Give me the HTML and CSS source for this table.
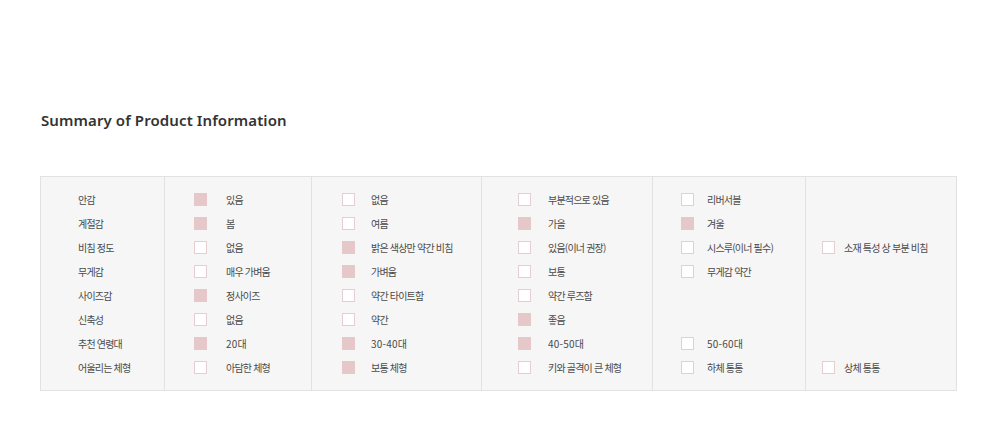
FILE: index.html
```html
<!DOCTYPE html>
<html lang="ko">
<head>
<meta charset="utf-8">
<title>Summary of Product Information</title>
<link rel="stylesheet" href="styles.css">
</head>
<body>
<div class="page">
  <h2 class="title">Summary of Product Information</h2>
  <div class="summary">
    <div class="col col-label">
      <div class="row">안감</div>
      <div class="row">계절감</div>
      <div class="row">비침 정도</div>
      <div class="row">무게감</div>
      <div class="row">사이즈감</div>
      <div class="row">신축성</div>
      <div class="row">추천 연령대</div>
      <div class="row">어울리는 체형</div>
    </div>
    <div class="col col-2">
      <div class="row"><span class="box on"></span><span class="txt">있음</span></div>
      <div class="row"><span class="box on"></span><span class="txt">봄</span></div>
      <div class="row"><span class="box"></span><span class="txt">없음</span></div>
      <div class="row"><span class="box"></span><span class="txt">매우 가벼움</span></div>
      <div class="row"><span class="box on"></span><span class="txt">정사이즈</span></div>
      <div class="row"><span class="box"></span><span class="txt">없음</span></div>
      <div class="row"><span class="box on"></span><span class="txt"><span class="num">20</span>대</span></div>
      <div class="row"><span class="box"></span><span class="txt">아담한 체형</span></div>
    </div>
    <div class="col col-3">
      <div class="row"><span class="box"></span><span class="txt">없음</span></div>
      <div class="row"><span class="box"></span><span class="txt">여름</span></div>
      <div class="row"><span class="box on"></span><span class="txt">밝은 색상만 약간 비침</span></div>
      <div class="row"><span class="box on"></span><span class="txt">가벼움</span></div>
      <div class="row"><span class="box"></span><span class="txt">약간 타이트함</span></div>
      <div class="row"><span class="box"></span><span class="txt">약간</span></div>
      <div class="row"><span class="box on"></span><span class="txt"><span class="num">30-40</span>대</span></div>
      <div class="row"><span class="box on"></span><span class="txt">보통 체형</span></div>
    </div>
    <div class="col col-4">
      <div class="row"><span class="box"></span><span class="txt">부분적으로 있음</span></div>
      <div class="row"><span class="box on"></span><span class="txt">가을</span></div>
      <div class="row"><span class="box"></span><span class="txt">있음(이너 권장)</span></div>
      <div class="row"><span class="box"></span><span class="txt">보통</span></div>
      <div class="row"><span class="box"></span><span class="txt">약간 루즈함</span></div>
      <div class="row"><span class="box on"></span><span class="txt">좋음</span></div>
      <div class="row"><span class="box on"></span><span class="txt"><span class="num">40-50</span>대</span></div>
      <div class="row"><span class="box"></span><span class="txt">키와 골격이 큰 체형</span></div>
    </div>
    <div class="col col-5">
      <div class="row"><span class="box"></span><span class="txt">리버서블</span></div>
      <div class="row"><span class="box on"></span><span class="txt">겨울</span></div>
      <div class="row"><span class="box"></span><span class="txt">시스루(이너 필수)</span></div>
      <div class="row"><span class="box"></span><span class="txt">무게감 약간</span></div>
      <div class="row"></div>
      <div class="row"></div>
      <div class="row"><span class="box"></span><span class="txt"><span class="num">50-60</span>대</span></div>
      <div class="row"><span class="box"></span><span class="txt">하체 통통</span></div>
    </div>
    <div class="col col-6">
      <div class="row"></div>
      <div class="row"></div>
      <div class="row"><span class="box"></span><span class="txt">소재 특성 상 부분 비침</span></div>
      <div class="row"></div>
      <div class="row"></div>
      <div class="row"></div>
      <div class="row"></div>
      <div class="row"><span class="box"></span><span class="txt">상체 통통</span></div>
    </div>
  </div>
</div>
</body>
</html>
```
FILE: styles.css
```css
* { box-sizing: border-box; }
body { margin: 0; background: #fff; }
.page { padding: 0 46px 0 40px; }
.title {
  margin: 0;
  padding: 108px 0 0 1px;
  font-family: "Noto Sans", sans-serif;
  font-size: 15px;
  font-weight: 600;
  line-height: 24px;
  color: #333;
  letter-spacing: 0.1px;
}
.summary {
  margin-top: 44px;
  display: grid;
  grid-template-columns: 123px 147px 170px 171px 153px 153px;
  background: #f6f6f6;
  border: 1px solid #e2e2e2;
  width: 917px;
}
.col {
  padding: 10px 0 11px 0;
  border-left: 1px solid #e2e2e2;
  font-family: "Noto Sans CJK KR", "Noto Sans", sans-serif;
  font-size: 10px;
  letter-spacing: -0.8px;
  color: #4a4a4a;
}
.num { letter-spacing: 0.2px; }
.col-label { border-left: 0; padding-left: 37px; }
.row { height: 24px; display: flex; align-items: center; }
.box {
  width: 13px; height: 13px; flex: none;
  background: #fff;
  border: 1px solid #e6cdcf;
}
.box.on { background: #e6c8ca; border-color: #e6c8ca; }
.col-2 { padding-left: 29px; }
.col-2 .box { margin-right: 19px; }
.col-3 { padding-left: 30px; }
.col-3 .box { margin-right: 16px; }
.col-4 { padding-left: 36px; }
.col-4 .box { margin-right: 17px; }
.col-5 { padding-left: 28px; }
.col-5 .box { margin-right: 13px; }
.col-6 { padding-left: 16px; }
.col-6 .box { margin-right: 9px; }
```
